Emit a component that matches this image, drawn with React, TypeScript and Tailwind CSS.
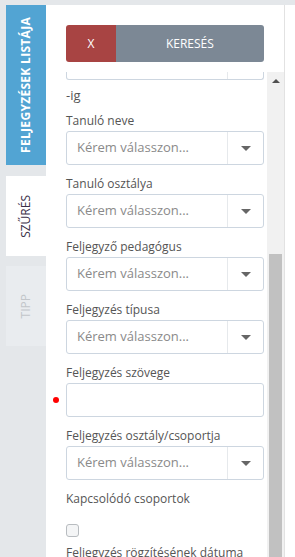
import React from "react";

function Select() {
  return (
    <div className="flex h-[34px] w-[198px] items-stretch rounded-[3px] border border-[#cdd6e0] bg-white">
      <div className="flex flex-1 items-center pl-[10px] text-[13px] text-[#8a8a8a]">
        Kérem válasszon...
      </div>
      <div className="flex w-[36px] items-center justify-center border-l border-[#e6e9ec]">
        <div className="h-0 w-0 border-x-[5px] border-t-[5px] border-x-transparent border-t-[#666]" />
      </div>
    </div>
  );
}

function Field({ label, children }: { label: string; children: React.ReactNode }) {
  return (
    <div className="mb-[11px]">
      <div className="mb-[2px] h-[16px] text-[12px] leading-[16px] text-[#555]">{label}</div>
      {children}
    </div>
  );
}

export default function App() {
  return (
    <div
      className="flex h-[557px] w-[295px] overflow-hidden bg-[#e4e7ea] pt-[5px]"
      style={{ fontFamily: '"Open Sans", Arial, sans-serif' }}
    >
      {/* Vertical tabs */}
      <div className="flex w-[46px] shrink-0 flex-col pl-[6px]">
        <div className="flex h-[160px] items-center justify-center bg-[#52a4d3]">
          <span className="rotate-180 text-[12px] font-bold tracking-[0.3px] text-white [writing-mode:vertical-rl]">
            FELJEGYZÉSEK LISTÁJA
          </span>
        </div>
        <div className="mt-[11px] flex h-[80px] items-center justify-center bg-white">
          <span className="rotate-180 text-[12px] text-[#3a2f48] [writing-mode:vertical-rl]">SZŰRÉS</span>
        </div>
        <div className="mt-[10px] flex h-[80px] items-center justify-center bg-[#e9ecef]">
          <span className="rotate-180 text-[12px] text-[#c2c6ca] [writing-mode:vertical-rl]">TIPP</span>
        </div>
      </div>

      {/* Panel */}
      <div className="flex w-[239px] shrink-0 flex-col border-r border-[#e2e2e2] bg-white">
        <div className="flex h-[67px] shrink-0 px-[20px] pt-[20px]">
          <div className="flex h-[37px] w-[50px] items-center justify-center rounded-l-[3px] bg-[#a84443] text-[12px] text-white">
            X
          </div>
          <div className="flex h-[37px] w-[149px] items-center justify-center rounded-r-[3px] bg-[#7c8895] text-[12px] text-white">
            KERESÉS
          </div>
        </div>

        <div className="flex flex-1 overflow-hidden">
          <div className="w-[222px] pl-[20px]">
            <div className="flex h-[8px] w-[198px] rounded-b-[3px] border border-t-0 border-[#cdd6e0]">
              <div className="flex-1" />
              <div className="w-[36px] border-l border-[#e6e9ec]" />
            </div>
            <div className="mb-[10px] mt-[7px] h-[16px] text-[13px] leading-[16px] text-[#555]">-ig</div>

            <Field label="Tanuló neve">
              <Select />
            </Field>
            <Field label="Tanuló osztálya">
              <Select />
            </Field>
            <Field label="Feljegyző pedagógus">
              <Select />
            </Field>
            <Field label="Feljegyzés típusa">
              <Select />
            </Field>
            <Field label="Feljegyzés szövege">
              <div className="relative h-[34px] w-[198px] rounded-[3px] border border-[#cdd6e0]">
                <span className="absolute left-[-14px] top-[13px] h-[6px] w-[6px] rounded-full bg-[#f00]" />
              </div>
            </Field>
            <Field label="Feljegyzés osztály/csoportja">
              <Select />
            </Field>

            <div className="h-[16px] text-[12px] leading-[16px] text-[#555]">Kapcsolódó csoportok</div>
            <div className="mt-[17px] h-[13px] w-[13px] rounded-[3px] border border-[#b8bcc0] bg-[#f4f5f6]" />
            <div className="mt-[8px] h-[16px] text-[12px] leading-[16px] text-[#555]">
              Feljegyzés rögzítésének dátuma
            </div>
          </div>

          {/* Scrollbar */}
          <div className="flex w-[17px] shrink-0 flex-col bg-[#f1f1f1]">
            <div className="flex h-[17px] items-center justify-center">
              <div className="h-0 w-0 border-x-[4px] border-b-[4px] border-x-transparent border-b-[#505050]" />
            </div>
            <div className="mt-[165px] mx-[2px] flex-1 bg-[#c1c1c1]" />
          </div>
        </div>
      </div>

      <div className="flex-1 bg-white" />
    </div>
  );
}
